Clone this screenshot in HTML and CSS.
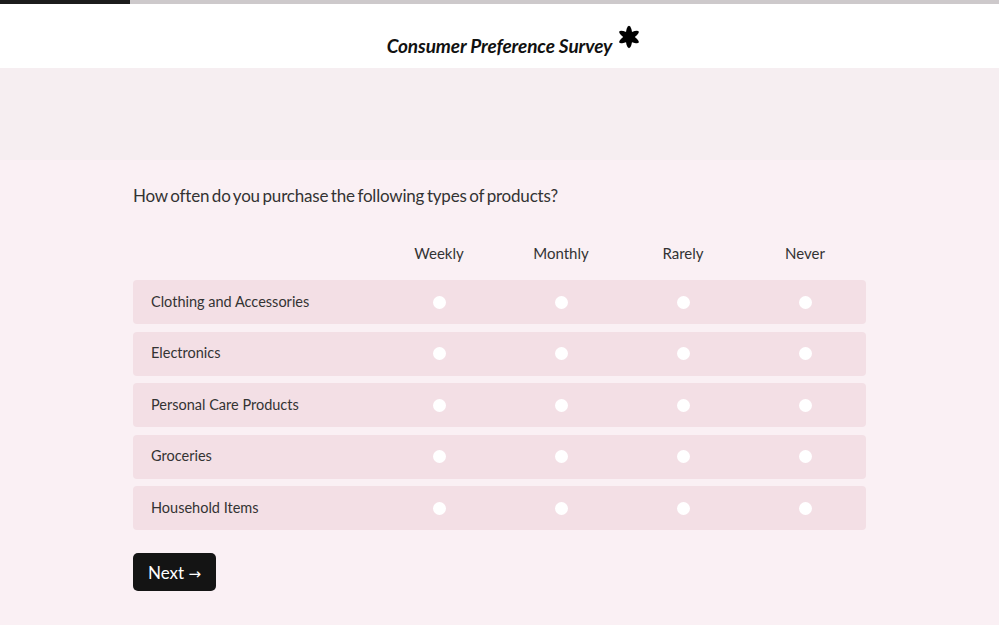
FILE: index.html
```html
<!DOCTYPE html>
<html lang="en">
<head>
    <meta charset="UTF-8">
    <meta name="viewport" content="width=device-width, initial-scale=1.0">
    <title>Consumer Preference Survey</title>
    <link rel="stylesheet" href="styles.css">
</head>
<body>
    <div class="progress"><div class="progress-fill"></div></div>
    <header class="header">
        <h1 class="title">Consumer Preference Survey
            <svg class="star" width="22" height="24" viewBox="0 0 22 24">
                <g transform="translate(11 12)" fill="#000">
                    <ellipse rx="3.4" ry="11.2"/>
                    <ellipse rx="3.4" ry="11.2" transform="rotate(60)"/>
                    <ellipse rx="3.4" ry="11.2" transform="rotate(120)"/>
                </g>
            </svg>
        </h1>
    </header>
    <div class="band"></div>
    <main class="survey">
        <p class="question">How often do you purchase the following types of products?</p>
        <div class="grid-head">
            <span></span>
            <span>Weekly</span>
            <span>Monthly</span>
            <span>Rarely</span>
            <span>Never</span>
        </div>
        <div class="row">
            <span class="label">Clothing and Accessories</span>
            <span class="cell"><span class="radio"></span></span>
            <span class="cell"><span class="radio"></span></span>
            <span class="cell"><span class="radio"></span></span>
            <span class="cell"><span class="radio"></span></span>
        </div>
        <div class="row">
            <span class="label">Electronics</span>
            <span class="cell"><span class="radio"></span></span>
            <span class="cell"><span class="radio"></span></span>
            <span class="cell"><span class="radio"></span></span>
            <span class="cell"><span class="radio"></span></span>
        </div>
        <div class="row">
            <span class="label">Personal Care Products</span>
            <span class="cell"><span class="radio"></span></span>
            <span class="cell"><span class="radio"></span></span>
            <span class="cell"><span class="radio"></span></span>
            <span class="cell"><span class="radio"></span></span>
        </div>
        <div class="row">
            <span class="label">Groceries</span>
            <span class="cell"><span class="radio"></span></span>
            <span class="cell"><span class="radio"></span></span>
            <span class="cell"><span class="radio"></span></span>
            <span class="cell"><span class="radio"></span></span>
        </div>
        <div class="row">
            <span class="label">Household Items</span>
            <span class="cell"><span class="radio"></span></span>
            <span class="cell"><span class="radio"></span></span>
            <span class="cell"><span class="radio"></span></span>
            <span class="cell"><span class="radio"></span></span>
        </div>
        <button class="next">Next <span class="arrow">&#8594;</span></button>
    </main>
</body>
</html>
```

FILE: styles.css
```css
body {
    margin: 0;
    font-family: Lato, "Open Sans", sans-serif;
    background-color: #faf0f4;
    color: #333;
    height: 625px;
    overflow: hidden;
}
.progress {
    height: 4px;
    background-color: #cdc9cb;
}
.progress-fill {
    width: 130px;
    height: 4px;
    background-color: #1c1c1c;
}
.header {
    height: 64px;
    background-color: #fff;
    display: flex;
    justify-content: center;
    align-items: flex-start;
}
.title {
    position: relative;
    margin: 30px 0 0 0;
    font-size: 19px;
    font-weight: 700;
    font-style: italic;
    color: #111;
    line-height: 24px;
    letter-spacing: -0.1px;
}
.star {
    position: absolute;
    left: 100%;
    top: -9px;
    margin-left: 6px;
}
.band {
    height: 92px;
    background-color: #f6eef1;
}
.survey {
    width: 733px;
    margin-left: 133px;
}
.question {
    margin: 24px 0 0 0;
    font-size: 17px;
    line-height: 24px;
    letter-spacing: -0.2px;
    word-spacing: -1.5px;
    color: #333;
}
.grid-head {
    display: grid;
    grid-template-columns: 245px repeat(4, 122px);
    margin-top: 33px;
    height: 24px;
    line-height: 24px;
    font-size: 15px;
    color: #333;
    text-align: center;
}
.row {
    display: grid;
    grid-template-columns: 245px repeat(4, 122px);
    align-items: center;
    height: 44px;
    margin-top: 7.5px;
    background-color: #f3dfe5;
    border-radius: 4px;
    font-size: 14.5px;
}
.grid-head + .row {
    margin-top: 15px;
}
.label {
    padding-left: 18px;
    padding-bottom: 2px;
    color: #333;
}
.cell {
    display: flex;
    justify-content: center;
}
.radio {
    width: 13px;
    height: 13px;
    border-radius: 50%;
    background-color: #fff;
}
.next {
    margin-top: 23px;
    padding: 0 15px;
    height: 38px;
    background-color: #141414;
    color: #fff;
    border: none;
    border-radius: 5px;
    font-family: Lato, sans-serif;
    font-size: 17px;
    cursor: pointer;
}
.arrow {
    font-family: "DejaVu Sans", sans-serif;
    font-size: 15px;
}
```
